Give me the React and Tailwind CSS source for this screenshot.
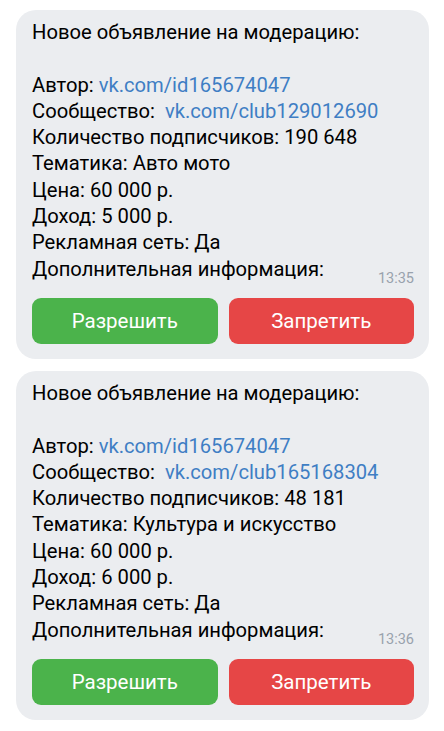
import React from 'react';

const posts = [
  {
    author: 'vk.com/id165674047',
    club: 'vk.com/club129012690',
    subs: '190 648',
    topic: 'Авто мото',
    price: '60 000 р.',
    income: '5 000 р.',
    time: '13:35',
  },
  {
    author: 'vk.com/id165674047',
    club: 'vk.com/club165168304',
    subs: '48 181',
    topic: 'Культура и искусство',
    price: '60 000 р.',
    income: '6 000 р.',
    time: '13:36',
  },
];

function Card({ post }) {
  return (
    <div className="bg-[#ebedf0] rounded-[20px] pt-[9px] pb-[15px] pl-[16px] pr-[15px]">
      <div className="text-[20.2px] leading-[26.3px] text-black">
        <div>Новое объявление на модерацию:</div>
        <div className="h-[26.3px]" />
        <div>
          Автор: <span className="text-[#3f7ec4]">{post.author}</span>
        </div>
        <div>
          Сообщество:&nbsp; <span className="text-[#3f7ec4]">{post.club}</span>
        </div>
        <div>Количество подписчиков: {post.subs}</div>
        <div>Тематика: {post.topic}</div>
        <div>Цена: {post.price}</div>
        <div>Доход: {post.income}</div>
        <div>Рекламная сеть: Да</div>
        <div className="flex items-end justify-between">
          <span>Дополнительная информация:</span>
          <span className="text-[14.5px] leading-[14px] text-[#99a2ad] mb-[-4px]">{post.time}</span>
        </div>
      </div>

      {/* Actions */}
      <div className="mt-[16px] flex gap-[11px]">
        <button className="flex-1 h-[46px] rounded-[9px] bg-[#4bb34b] text-white text-[20.5px]">
          Разрешить
        </button>
        <button className="flex-1 h-[46px] rounded-[9px] bg-[#e64646] text-white text-[20.5px]">
          Запретить
        </button>
      </div>
    </div>
  );
}

export default function App() {
  return (
    <div className="min-h-screen bg-white pt-[10px] pr-[15px] pl-[16px] flex flex-col gap-[12px] font-['Roboto',sans-serif]">
      {posts.map((p, i) => (
        <Card key={i} post={p} />
      ))}
    </div>
  );
}
